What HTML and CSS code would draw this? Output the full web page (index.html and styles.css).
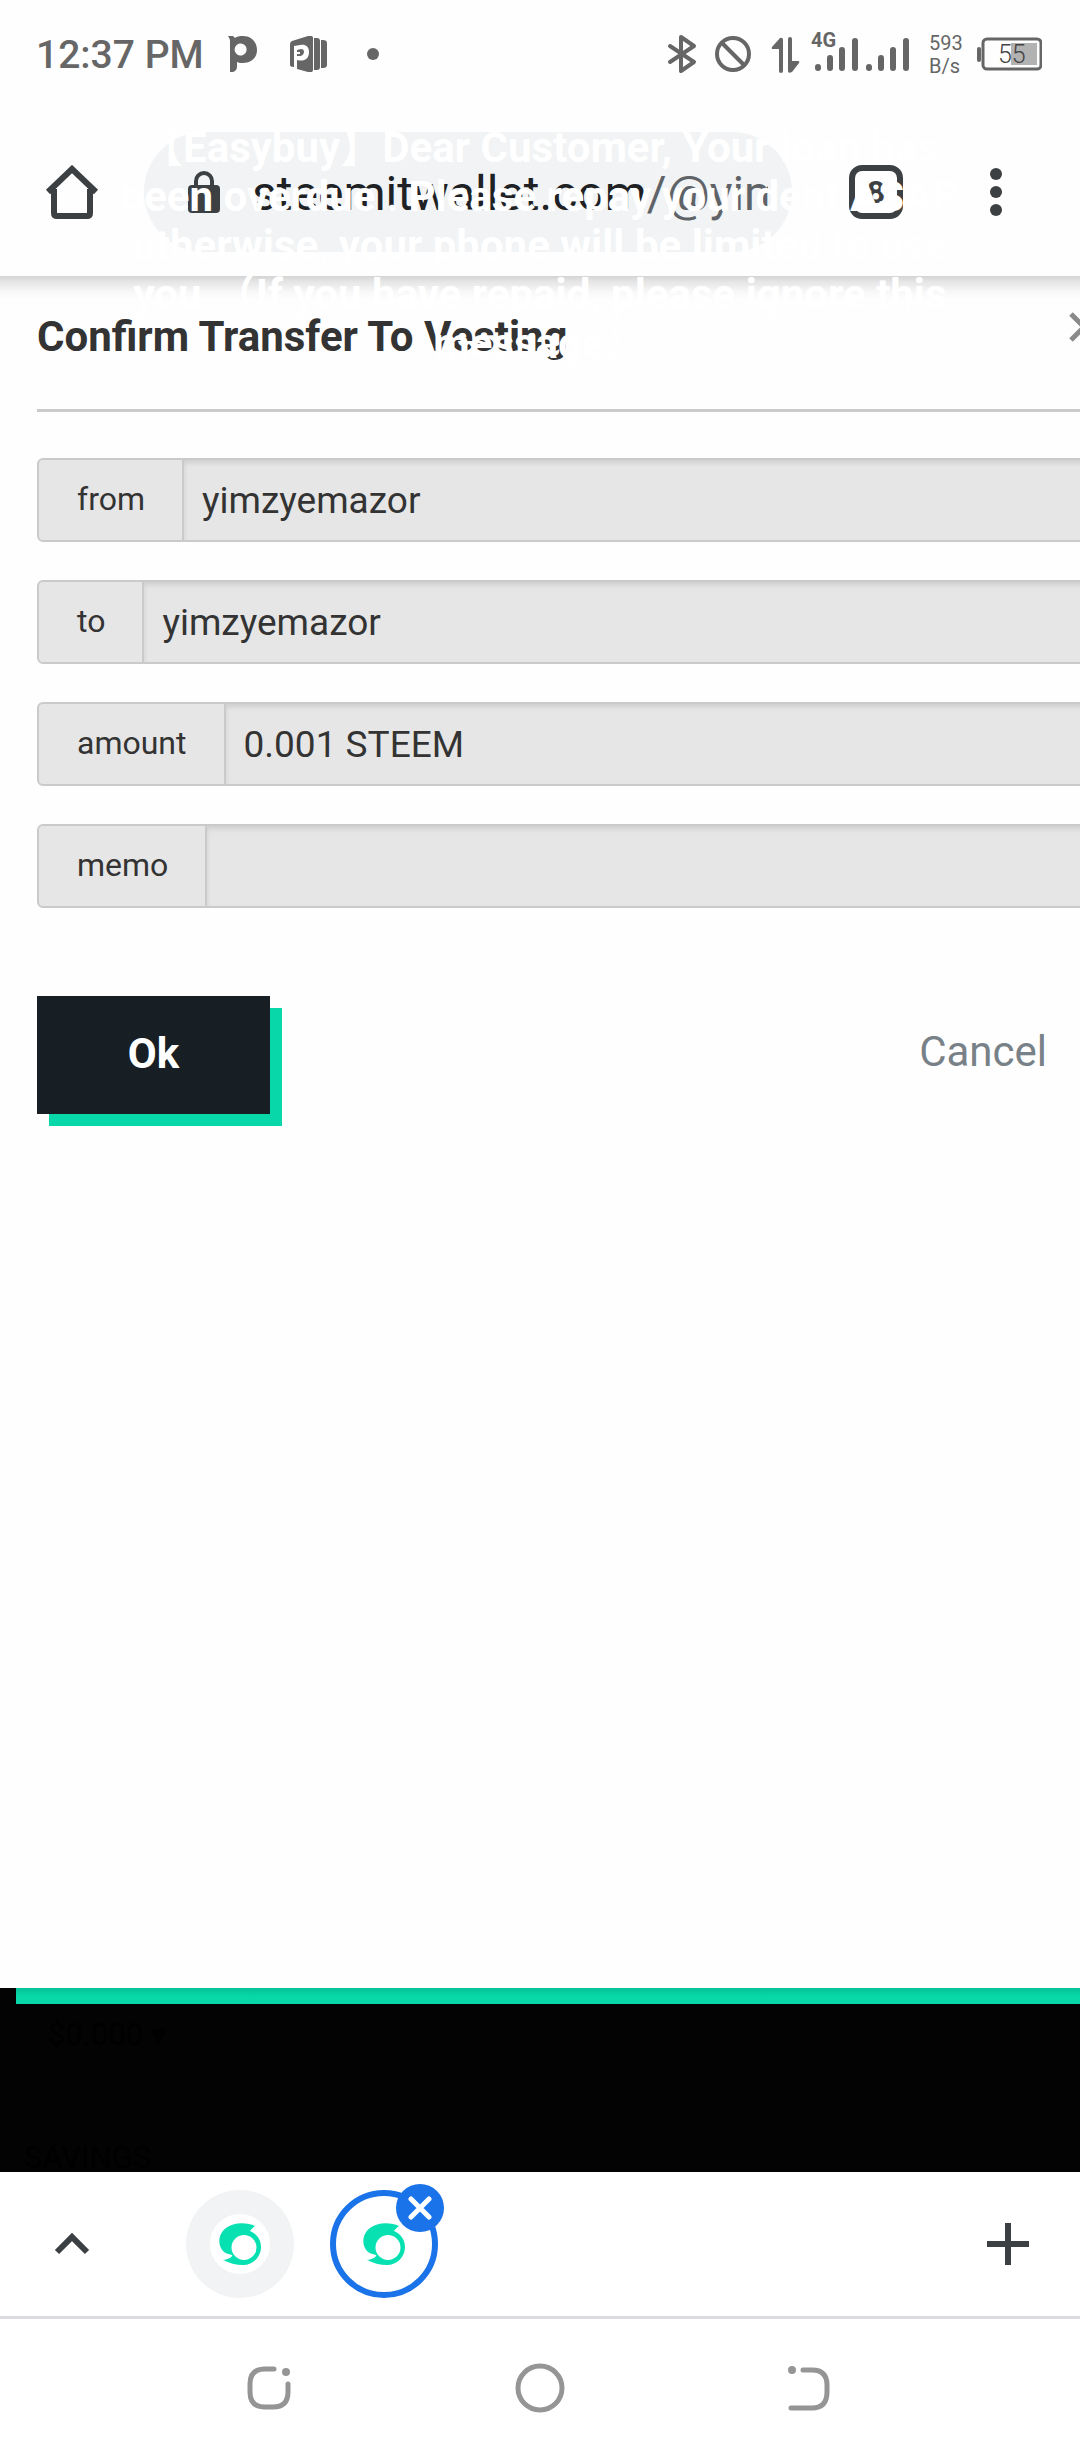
FILE: index.html
```html
<!DOCTYPE html>
<html lang="en">
<head>
    <meta charset="utf-8">
    <meta name="viewport" content="width=device-width">
    <title>Confirm Transfer To Vesting</title>
    <link rel="stylesheet" href="styles.css">
</head>
<body>
    <header class="status-bar">
        <span class="clock">12:37 PM</span>
        <div class="notifications">
            <svg width="30" height="36" viewBox="0 0 30 36">
                <path fill-rule="evenodd" d="M0 0h5l2 2C9 .500 11 0 15 0c8 0 14 6 14 14s-6 13-14 13c-2 0-4 0-6-1v4c0 4-2 6-6 6H2V5C2 3 1 2 0 0zM15 8a6 6 0 1 0 0 11 6 6 0 0 0 0-11z"/>
            </svg>
            <svg width="37" height="36" viewBox="0 0 37 36">
                <path fill-rule="evenodd" d="M0 8q0-2 2-3L18 0q5-1 5 2v32q0 3-5 2L7 33V24c7 2 12-1 12-8 0-6-4-8-9-7l-6 1v21c-3 0-4-1-4-2zM7 14l4-1c2 0 3 1 3 3s-2 4-4 4H7v-2h3v-2H7z"/>
                <path d="M24 2h3q3 0 3 3v26q0 3-3 3h-3zM31 4h2q4 0 4 3v22q0 3-4 3h-2z"/>
            </svg>
            <svg width="12" height="36" viewBox="0 0 12 36"><circle cx="6" cy="18" r="6"/></svg>
        </div>
        <div class="indicators">
            <svg width="43" height="40" viewBox="0 0 43 40">
                <path class="line" d="M6 12l24 16-13 9V3l13 9L6 28"/>
            </svg>
            <svg width="41" height="40" viewBox="0 0 41 40">
                <circle class="line" cx="18" cy="20" r="16"/>
                <path class="line" d="M7 9l22 22"/>
            </svg>
            <svg width="36" height="40" viewBox="0 0 36 40">
                <path d="M17 39q-2 0-2-2V15H9q-2 0-1-2l8-9q3-1 3 2v31q0 2-2 2zM26 3q2 0 2 2v22h6q2 0 1 2l-7 9q-4 2-4-1V5q0-2 2-2z"/>
            </svg>
            <svg width="113" height="44" viewBox="0 0 113 44">
                <text class="network" x="3" y="15">4G</text>
                <path class="bars" d="M10 35v1M22 26v10M34 18v18M47 9v27M61 35v1M73 26v10M85 18v18M98 9v27"/>
            </svg>
            <span class="rate">593<br>B/s</span>
            <svg width="65" height="40" viewBox="0 0 65 40">
                <rect x="0" y="13" width="4" height="15" rx="2"/>
                <rect class="line thin" x="6" y="5" width="58" height="30" rx="4"/>
                <rect class="charge" x="34" y="9" width="26" height="22"/>
                <text class="level" x="21" y="29">55</text>
            </svg>
        </div>
    </header>

    <nav class="toolbar">
        <button class="home" aria-label="Home">
            <svg width="54" height="54" viewBox="0 0 54 54">
                <path class="edge" d="M3 27L27 4l24 23M9 24v24q0 3 3 3h30q3 0 3-3V24"/>
            </svg>
        </button>
        <a class="address" href="#">
            <svg class="lock" width="32" height="42" viewBox="0 0 32 42">
                <path class="shackle" d="M8 16V10a8 8 0 0 1 16 0v6"/>
                <rect y="14" width="32" height="28" rx="4"/>
            </svg>
            <span class="url">steemitwallet.com<span class="path">/@yimzyemazor</span></span>
        </a>
        <button class="tabs"><span class="tab-count">8</span></button>
        <button class="menu" aria-label="Menu">
            <svg width="12" height="48" viewBox="0 0 12 48">
                <circle cx="6" cy="6" r="6"/><circle cx="6" cy="24" r="6"/><circle cx="6" cy="42" r="6"/>
            </svg>
        </button>
    </nav>

    <main class="modal">
        <div class="modal-head">
            <h1>Confirm Transfer To Vesting</h1>
            <button class="close" aria-label="Close">
                <svg width="30" height="30" viewBox="0 0 30 30"><path d="M2 2l26 26M28 2L2 28"/></svg>
            </button>
        </div>
        <form class="fields">
            <div class="field">
                <label for="from">from</label>
                <input id="from" type="text" value="yimzyemazor" readonly>
            </div>
            <div class="field">
                <label for="to">to</label>
                <input id="to" type="text" value="yimzyemazor" readonly>
            </div>
            <div class="field">
                <label for="amount">amount</label>
                <input id="amount" type="text" value="0.001 STEEM" readonly>
            </div>
            <div class="field">
                <label for="memo">memo</label>
                <input id="memo" type="text" readonly>
            </div>
            <div class="actions">
                <button class="ok" type="submit">Ok</button>
                <button class="cancel" type="button">Cancel</button>
            </div>
        </form>
    </main>

    <section class="backdrop">
        <span class="balance">$0.000 ▾</span>
        <span class="savings">SAVINGS</span>
    </section>

    <!-- Tab group strip -->
    <nav class="tab-strip">
        <button class="expand" aria-label="Expand">
            <svg width="36" height="24" viewBox="0 0 36 24"><path class="edge" d="M3 20L18 5l15 15"/></svg>
        </button>
        <button class="tab" aria-label="Steemit tab">
            <span class="favicon">
                <svg width="42" height="42" viewBox="0 0 42 42">
                    <path id="steem" fill-rule="evenodd" d="M36 3C28-1 14-1 7 5-1 11-2 23 5 29c3 2 6 2 8 3 1 1-2 4-9 5 6 3 13 5 20 5 10 0 18-8 18-18 0-7-4-13-11-16 1-2 3-3 5-5zM25 12a12 12 0 0 1 0 25 12 12 0 0 1 0-25z"/>
                </svg>
            </span>
        </button>
        <button class="tab active" aria-label="Close current tab">
            <svg width="42" height="42" viewBox="0 0 42 42"><use href="#steem"/></svg>
            <span class="badge">
                <svg width="24" height="24" viewBox="0 0 24 24"><path d="M3 3l18 18M21 3L3 21"/></svg>
            </span>
        </button>
        <button class="add" aria-label="New tab">
            <svg width="42" height="42" viewBox="0 0 42 42"><path class="edge" d="M0 21h42M21 0v42"/></svg>
        </button>
    </nav>

    <nav class="system-nav">
        <button aria-label="Recent apps">
            <svg width="50" height="50" viewBox="0 0 50 50">
                <path d="M29 6h-9Q5 6 5 21v8q0 15 15 15h8q15 0 15-15v-8"/>
                <circle class="dot" cx="41" cy="9" r="4"/>
            </svg>
        </button>
        <button aria-label="Home screen">
            <svg width="50" height="50" viewBox="0 0 50 50"><circle cx="25" cy="25" r="22"/></svg>
        </button>
        <button aria-label="Back">
            <svg width="50" height="50" viewBox="0 0 50 50">
                <path d="M18 7h9q15 0 15 15v7q0 16-15 16H6"/>
                <circle class="dot" cx="7" cy="7" r="4"/>
            </svg>
        </button>
    </nav>

    <!-- System notice floating over the browser -->
    <p class="notice">【Easybuy】Dear Customer, Your loan has<br>been overdue . Please repay your debt ASAP<br>otherwise, your phone will be limited to use<br>you.（If you have repaid, please ignore this<br>message）</p>
</body>
</html>
```
FILE: styles.css
```css
:root {
    --ink: #3c4043;
    --status: #666;
    --green: #07d7a9;
    --border: #cacaca;
    --blue: #1a73e8;
}

* {
    box-sizing: border-box;
}

body {
    position: relative;
    display: flex;
    flex-direction: column;
    min-height: 100vh;
    margin: 0;
    background: #fefefe;
    color: #333;
    font-family: Roboto, "Noto Sans CJK SC", sans-serif;
    overflow-x: hidden;
}

button {
    display: flex;
    align-items: center;
    justify-content: center;
    padding: 0;
    border: none;
    background: none;
    font-family: inherit;
    cursor: pointer;
}

svg {
    display: block;
    flex: none;
}

/* Status bar */
.status-bar {
    display: flex;
    align-items: center;
    height: 108px;
    padding: 0 38px 0 36px;
    color: var(--status);
    fill: var(--status);
}

.clock {
    padding-top: 2px;
    font-size: 39px;
    font-weight: 500;
}

.notifications {
    display: flex;
    gap: 32px;
    margin-left: 24px;
}

.notifications svg:last-child {
    margin-left: 8px;
}

.indicators {
    display: flex;
    align-items: center;
    gap: 8px;
    margin-left: auto;
}

.line {
    fill: none;
    stroke: var(--status);
    stroke-width: 4px;
    stroke-linejoin: round;
    stroke-linecap: round;
}

.thin {
    stroke-width: 3px;
}

.bars {
    stroke: var(--status);
    stroke-width: 6px;
    stroke-linecap: round;
}

.network {
    font-size: 20px;
    font-weight: 700;
}

.rate {
    width: 40px;
    padding-top: 2px;
    font-size: 20px;
    line-height: 23px;
}

.charge {
    fill: #b2b2b2;
}

.level {
    fill: #444;
    font-size: 25px;
    font-weight: 300;
}

/* Browser toolbar */
.toolbar {
    display: flex;
    align-items: center;
    height: 168px;
    padding-right: 48px;
    fill: var(--ink);
}

.edge {
    fill: none;
    stroke: var(--ink);
    stroke-width: 6px;
}

.home {
    width: 144px;
    height: 120px;
}

.address {
    display: flex;
    flex: 1;
    align-items: center;
    gap: 32px;
    min-width: 0;
    height: 120px;
    padding: 0 24px 0 44px;
    border-radius: 60px;
    background: #f1f3f4;
    color: #202124;
    text-decoration: none;
}

.shackle {
    fill: none;
    stroke: var(--ink);
    stroke-width: 4px;
}

.url {
    padding-top: 2px;
    overflow: hidden;
    font-size: 48px;
    white-space: nowrap;
}

.path {
    color: #5f6368;
}

.tabs {
    width: 168px;
    height: 120px;
}

.tab-count {
    width: 54px;
    height: 54px;
    border: 6px solid var(--ink);
    border-radius: 13px;
    color: var(--ink);
    font-size: 32px;
    font-weight: 700;
    line-height: 42px;
}

.menu {
    width: 72px;
    height: 120px;
}

/* Modal */
.modal {
    flex: 1;
    padding-left: 37px;
    background: linear-gradient(#d4d4d4, #e6e6e6 6px, #f8f8f8 16px, #fefefe 24px);
    overflow: hidden;
}

.modal-head {
    display: flex;
    align-items: center;
    justify-content: space-between;
    height: 136px;
    padding-bottom: 12px;
    border-bottom: 3px solid var(--border);
    overflow: hidden;
}

h1 {
    margin: 0;
    font-size: 42px;
    font-weight: 700;
}

.close {
    margin: 0 -19px 20px 0;
}

.close path {
    stroke: #8a8a8a;
    stroke-width: 5px;
}

.fields {
    display: flex;
    flex-direction: column;
    gap: 38px;
    padding-top: 46px;
}

/* Fields run past the right edge of the screen */
.field {
    display: flex;
    height: 84px;
    margin-right: -10px;
    border: 2px solid var(--border);
    border-radius: 6px;
    background: #e6e6e6;
}

.field label {
    padding: 0 37px 0 38px;
    font-size: 32px;
    line-height: 79px;
}

.field input {
    flex: 1;
    min-width: 0;
    padding: 0 18px;
    border: none;
    border-left: 2px solid var(--border);
    background: none;
    box-shadow: inset 0 3px 5px rgba(0, 0, 0, 0.1);
    color: #333;
    font-family: inherit;
    font-size: 37px;
}

.actions {
    display: flex;
    justify-content: space-between;
    padding: 50px 33px 0 0;
}

.ok,
.cancel {
    height: 118px;
    padding-bottom: 4px;
    font-size: 42px;
}

.ok {
    width: 233px;
    background: #171f24;
    box-shadow: 12px 12px 0 var(--green);
    color: #fff;
    font-weight: 700;
}

.cancel {
    padding-bottom: 8px;
    color: #788187;
}

/* Dimmed page under the modal */
.backdrop {
    display: flex;
    flex-direction: column;
    justify-content: space-between;
    height: 184px;
    padding: 0 0 0 24px;
    background: linear-gradient(90deg, #030303 16px, transparent 16px),
                linear-gradient(#07c196, var(--green) 8px, var(--green) 16px, #030303 16px);
    color: #000;
    font-size: 31px;
}

.balance {
    padding: 28px 0 0 24px;
}

.savings {
    line-height: 28px;
}

/* Tab strip */
.tab-strip {
    display: flex;
    align-items: center;
    height: 147px;
    padding-right: 51px;
    border-bottom: 3px solid #dadce0;
    background: #fff;
}

.expand {
    width: 144px;
    height: 108px;
}

.tab {
    position: relative;
    width: 108px;
    height: 108px;
    margin-left: 42px;
    border-radius: 50%;
    background: #f1f3f4;
    fill: #07e1b2;
}

.favicon {
    display: flex;
    align-items: center;
    justify-content: center;
    width: 60px;
    height: 60px;
    border-radius: 50%;
    background: #fff;
}

.active {
    margin-left: 36px;
    border: 6px solid var(--blue);
    background: #fff;
}

.badge {
    position: absolute;
    top: -12px;
    right: -12px;
    display: flex;
    align-items: center;
    justify-content: center;
    width: 48px;
    height: 48px;
    border-radius: 50%;
    background: var(--blue);
}

.badge path {
    stroke: #fff;
    stroke-width: 5px;
    stroke-linecap: round;
}

.add {
    margin-left: auto;
}

/* System navigation */
.system-nav {
    display: flex;
    justify-content: center;
    height: 141px;
    padding-bottom: 4px;
    background: #fff;
}

.system-nav button {
    width: 25%;
}

.system-nav svg {
    fill: none;
    stroke: #959595;
    stroke-width: 5px;
    stroke-linecap: round;
}

.system-nav .dot {
    fill: #959595;
    stroke: none;
}

.notice {
    position: absolute;
    top: 123px;
    left: 0;
    width: 100%;
    margin: 0;
    color: #fff;
    font-size: 42px;
    font-weight: 700;
    line-height: 49px;
    text-align: center;
    white-space: nowrap;
    pointer-events: none;
}
```
